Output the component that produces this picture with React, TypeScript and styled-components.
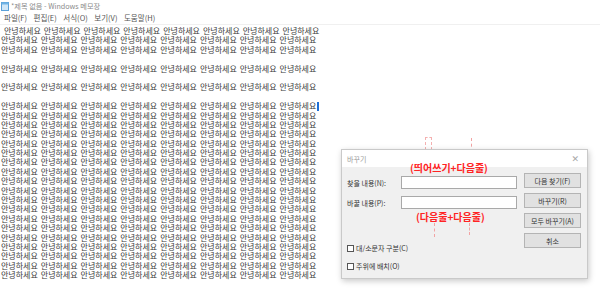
import React from "react";
import styled, { createGlobalStyle } from "styled-components";

const FONT = `"Noto Sans CJK KR", "Noto Sans", sans-serif`;

const Global = createGlobalStyle`
  html, body { margin: 0; padding: 0; background: #fff; }
  body { width: 600px; height: 298px; overflow: hidden; font-family: ${FONT}; }
  #root { width: 600px; height: 298px; }
`;

const Window = styled.div`
  position: relative;
  width: 600px;
  height: 298px;
  background: #fff;
  display: flex;
  flex-direction: column;
  overflow: hidden;
`;

const TitleBar = styled.div`
  height: 12px;
  display: flex;
  align-items: center;
  gap: 2px;
  padding-left: 1px;
  font-size: 7.2px;
  color: #8a8a8a;
  line-height: 12px;
`;

const MenuBar = styled.div`
  height: 12px;
  display: flex;
  align-items: center;
  gap: 6.5px;
  padding-left: 4px;
  font-size: 7.5px;
  color: #555;
  line-height: 12px;
`;

const Editor = styled.div`
  flex: 1;
  border-top: 1px solid #f0f0f0;
  padding: 1px 0 0 1px;
  font-size: 8px;
  word-spacing: 1.2px;
  color: #3a3a3a;
`;

const Line = styled.div`
  height: 9.4px;
  line-height: 9.4px;
  white-space: pre;
`;

const Caret = styled.span`
  display: inline-block;
  width: 2px;
  height: 9px;
  margin-left: 1px;
  background: #1f6fd6;
  vertical-align: -2px;
`;

const Dialog = styled.div`
  position: absolute;
  left: 341px;
  top: 149px;
  width: 247px;
  height: 130px;
  box-sizing: border-box;
  border: 1px solid #c9c9c9;
  background: #f0f0f0;
  box-shadow: 1px 2px 6px rgba(0, 0, 0, 0.22);
  display: flex;
  flex-direction: column;
  font-size: 7px;
  color: #333;
`;

const DialogTitle = styled.div`
  height: 17px;
  background: #fff;
  display: flex;
  align-items: center;
  justify-content: space-between;
  padding: 0 8px 0 5px;
  color: #9a9a9a;
  font-size: 7px;
`;

const CloseX = styled.span`
  font-size: 9px;
  color: #a8a8a8;
  font-family: "DejaVu Sans", sans-serif;
`;

const DialogBody = styled.div`
  flex: 1;
  display: flex;
  padding: 6px 6px 0 5px;
`;

const FormCol = styled.div`
  flex: 1;
  display: flex;
  flex-direction: column;
  padding-top: 3px;
`;

const FieldRow = styled.div`
  display: flex;
  align-items: center;
  height: 13px;
  margin-bottom: 7px;
`;

const Label = styled.span`
  width: 54px;
  white-space: nowrap;
`;

const Input = styled.div`
  width: 116px;
  height: 13px;
  box-sizing: border-box;
  background: #fff;
  border: 1px solid #a9a9a9;
`;

const CheckRow = styled.label<{ $top: number }>`
  display: flex;
  align-items: center;
  gap: 2px;
  margin-top: ${(p) => p.$top}px;
  height: 8px;
  white-space: nowrap;
`;

const Box = styled.span`
  width: 7px;
  height: 7px;
  box-sizing: border-box;
  border: 1px solid #555;
  background: #fff;
`;

const ButtonCol = styled.div`
  width: 57px;
  display: flex;
  flex-direction: column;
  gap: 5px;
`;

const Button = styled.div`
  height: 15px;
  box-sizing: border-box;
  border: 1px solid #b4b4b4;
  background: #e1e1e1;
  display: flex;
  align-items: center;
  justify-content: center;
  font-size: 7px;
  color: #333;
  white-space: nowrap;
`;

const Note = styled.div<{ $left: number; $top: number }>`
  position: absolute;
  left: ${(p) => p.$left}px;
  top: ${(p) => p.$top}px;
  color: #ff2323;
  font-weight: 700;
  font-size: 10px;
  line-height: 11px;
  white-space: nowrap;
`;

const DashV = styled.div<{ $left: number; $top: number; $h: number }>`
  position: absolute;
  left: ${(p) => p.$left}px;
  top: ${(p) => p.$top}px;
  height: ${(p) => p.$h}px;
  border-left: 1px dashed #f2a3a3;
`;

const DashBox = styled.div`
  position: absolute;
  left: 425px;
  top: 137px;
  width: 7px;
  height: 23px;
  border: 1px dashed #f4b0b0;
  box-sizing: border-box;
`;

const NotepadIcon = () => (
  <svg width="8" height="9" viewBox="0 0 8 9">
    <rect x="0.5" y="0.5" width="7" height="8" fill="#cfe6f7" stroke="#5aa0d8" strokeWidth="1" />
    <rect x="0.5" y="0.5" width="7" height="2" fill="#6fb3e6" />
  </svg>
);

const WORD = "안녕하세요";
const FULL = Array(8).fill(WORD).join(" ");

export default function App() {
  const lines: React.ReactNode[] = [" " + FULL, FULL, FULL, "", FULL, "", FULL, "", (
    <>
      {FULL}
      <Caret />
    </>
  )];
  for (let i = 0; i < 18; i++) lines.push(FULL);

  return (
    <Window>
      <Global />
      <TitleBar>
        <NotepadIcon />
        <span>*제목 없음 - Windows 메모장</span>
      </TitleBar>
      <MenuBar>
        <span>파일(F)</span>
        <span>편집(E)</span>
        <span>서식(O)</span>
        <span>보기(V)</span>
        <span>도움말(H)</span>
      </MenuBar>
      <Editor>
        {lines.map((l, i) => (
          <Line key={i}>{l === "" ? "\u00a0" : l}</Line>
        ))}
      </Editor>

      <DashBox />
      <DashV $left={471} $top={138} $h={20} />

      <Dialog>
        <DialogTitle>
          <span>바꾸기</span>
          <CloseX>✕</CloseX>
        </DialogTitle>
        <DialogBody>
          <FormCol>
            <FieldRow>
              <Label>찾을 내용(N):</Label>
              <Input />
            </FieldRow>
            <FieldRow>
              <Label>바꿀 내용(P):</Label>
              <Input />
            </FieldRow>
            <CheckRow $top={28}>
              <Box />
              <span>대/소문자 구분(C)</span>
            </CheckRow>
            <CheckRow $top={10}>
              <Box />
              <span>주위에 배치(O)</span>
            </CheckRow>
          </FormCol>
          <ButtonCol>
            <Button>다음 찾기(F)</Button>
            <Button>바꾸기(R)</Button>
            <Button>모두 바꾸기(A)</Button>
            <Button>취소</Button>
          </ButtonCol>
        </DialogBody>
      </Dialog>

      <Note $left={410} $top={162}>(띄어쓰기+다음줄)</Note>
      <Note $left={416} $top={211}>(다음줄+다음줄)</Note>
      <DashV $left={434} $top={223} $h={14} />
      <DashV $left={469} $top={223} $h={12} />
    </Window>
  );
}
